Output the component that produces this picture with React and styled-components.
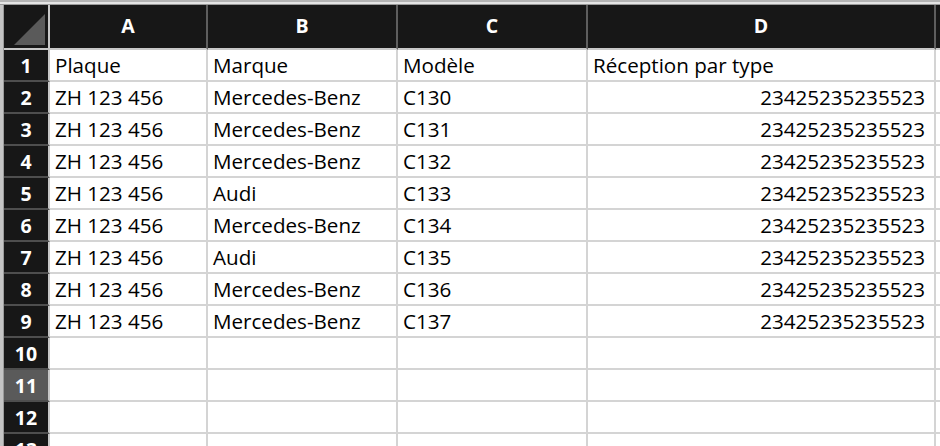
import React from "react";
import styled, { createGlobalStyle } from "styled-components";

const GlobalStyle = createGlobalStyle`
  html, body {
    margin: 0;
    padding: 0;
    background: #c2c2c2;
    overflow: hidden;
  }
`;

const Frame = styled.div`
  width: 940px;
  height: 446px;
  overflow: hidden;
  display: flex;
  flex-direction: column;
  background: #c2c2c2;
`;

const TopStrip = styled.div`
  height: 5px;
  flex: none;
  background: linear-gradient(
    to bottom,
    #b4b4b4 0px,
    #b4b4b4 2px,
    #e4e4e4 2px,
    #e4e4e4 4px,
    #9a9a9a 4px
  );
`;

const Body = styled.div`
  display: flex;
  flex: 1;
  min-height: 0;
`;

const LeftStrip = styled.div`
  width: 4px;
  flex: none;
  background: linear-gradient(to right, #c4c4c4 0px, #c4c4c4 3px, #9a9a9a 3px);
`;

const Sheet = styled.div`
  flex: 1;
  display: grid;
  grid-template-columns: 46px 158px 190px 190px 348px 1fr;
  grid-auto-rows: 32px;
  grid-template-rows: 45px;
  align-content: start;
  background: #ffffff;
  font-family: "Open Sans", "Liberation Sans", sans-serif;
  font-size: 20.6px;
  color: #000;
`;

const Corner = styled.div`
  background: #171717;
  border-right: 2px solid #c8c8c8;
  border-bottom: 2px solid #c8c8c8;
  display: flex;
  align-items: flex-end;
  justify-content: flex-end;
  padding: 0 3px 3px 0;
`;

const ColHead = styled.div`
  background: #171717;
  color: #fff;
  font-weight: 700;
  font-size: 19.5px;
  display: flex;
  align-items: center;
  justify-content: center;
  border-right: 2px solid ${(p) => (p.$last ? "transparent" : "#5e5e5e")};
  border-bottom: 2px solid #c8c8c8;
  padding-bottom: 2px;
`;

const RowHead = styled.div`
  background: ${(p) => (p.$active ? "#5a5a5a" : "#171717")};
  color: #fff;
  font-weight: 700;
  font-size: 19.5px;
  display: flex;
  align-items: center;
  justify-content: center;
  border-right: 2px solid #c8c8c8;
  border-bottom: 2px solid #4e4e4e;
`;

const Cell = styled.div`
  display: flex;
  align-items: center;
  justify-content: ${(p) => (p.$num ? "flex-end" : "flex-start")};
  padding: 0 ${(p) => (p.$num ? "9px" : "0")} 0 ${(p) => (p.$num ? "0" : "5px")};
  border-right: 2px solid #d4d4d4;
  border-bottom: 2px solid #d4d4d4;
  white-space: nowrap;
  overflow: hidden;
  line-height: 1;
`;

const columns = ["A", "B", "C", "D"];

const rows = [
  ["Plaque", "Marque", "Modèle", "Réception par type"],
  ["ZH 123 456", "Mercedes-Benz", "C130", "23425235235523"],
  ["ZH 123 456", "Mercedes-Benz", "C131", "23425235235523"],
  ["ZH 123 456", "Mercedes-Benz", "C132", "23425235235523"],
  ["ZH 123 456", "Audi", "C133", "23425235235523"],
  ["ZH 123 456", "Mercedes-Benz", "C134", "23425235235523"],
  ["ZH 123 456", "Audi", "C135", "23425235235523"],
  ["ZH 123 456", "Mercedes-Benz", "C136", "23425235235523"],
  ["ZH 123 456", "Mercedes-Benz", "C137", "23425235235523"],
  ["", "", "", ""],
  ["", "", "", ""],
  ["", "", "", ""],
  ["", "", "", ""],
];

function CornerMark() {
  return (
    <svg width="31" height="31" viewBox="0 0 31 31">
      <polygon points="31,0 31,31 0,31" fill="#5a5a5a" />
    </svg>
  );
}

function App() {
  return (
    <Frame>
      <GlobalStyle />
      <TopStrip />
      <Body>
        <LeftStrip />
        <Sheet>
          <Corner>
            <CornerMark />
          </Corner>
          {columns.map((c) => (
            <ColHead key={c}>{c}</ColHead>
          ))}
          <ColHead $last />
          {rows.map((row, i) => (
            <React.Fragment key={i}>
              <RowHead $active={i === 10}>{i + 1}</RowHead>
              {row.map((value, j) => (
                <Cell key={j} $num={j === 3 && i > 0}>
                  {value}
                </Cell>
              ))}
              <Cell />
            </React.Fragment>
          ))}
        </Sheet>
      </Body>
    </Frame>
  );
}

export default App;
